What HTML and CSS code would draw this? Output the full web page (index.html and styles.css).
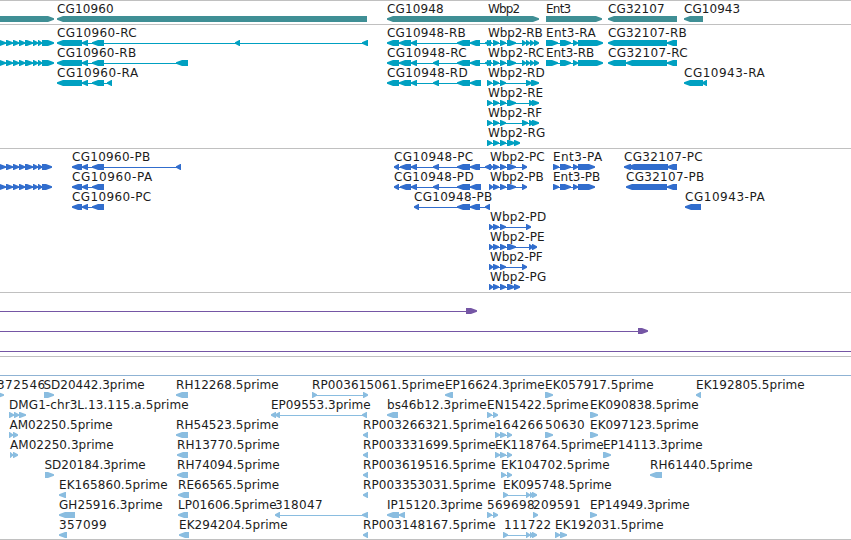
FILE: index.html
```html
<!DOCTYPE html>
<html lang="en">
<head>
<meta charset="utf-8">
<title>Genome browser</title>
<link rel="stylesheet" href="styles.css">
</head>
<body>
<main class="browser">
  <section class="track genes" data-track="genes"></section>
  <section class="track transcripts" data-track="transcripts"></section>
  <section class="track proteins" data-track="proteins"></section>
  <section class="track insertions" data-track="insertions"></section>
  <section class="track empty"></section>
  <section class="track ests" data-track="ests"></section>
</main>
<script src="tracks.js"></script>
</body>
</html>
```
FILE: styles.css
```css
body {
  margin: 0;
  background: #fff;
  overflow: hidden;
}
.browser {
  display: flex;
  flex-direction: column;
  width: 851px;
  height: 540px;
  overflow: hidden;
}
.track {
  box-sizing: border-box;
  flex: none;
  border-top: 1px solid #c0c0c0;
}
.genes { height: 24px; color: #3f8f95; }
.transcripts { height: 124px; color: #00a0c1; }
.proteins { height: 144px; color: #316dcd; }
.insertions { height: 64px; color: #7556a5; }
.empty { height: 19px; }
.ests {
  height: 165px;
  padding-top: 1px;
  color: #8abde0;
  border-top-color: #8fb3d4;
  border-bottom: 1px solid #c0c0c0;
}
.row {
  display: block;
  width: 851px;
  height: 20px;
  overflow: visible;
}
.label {
  font: 12px "DejaVu Sans", "Liberation Sans", sans-serif;
  fill: #1c1c1c;
}
.exon, .intron { fill: currentColor; }
.intron { shape-rendering: crispEdges; }
```
FILE: tracks.js
```js
// Feature: [label, labelStart, labelEnd, direction, [start, end, start, end, ...]]
const lead = [-1,6, 6,13, 13,19, 19,25, 25,33, 33,38, 38,42];
const tri = [487,492, 493,499, 500,506];
const ptri = [489,493, 493,499, 500,506];
const wb = [...tri, 507,516, 522,526, 526,530, 530,534, 534,539];
const est3 = [495,500, 500,506, 507,512];
const tail = [503,508, 526,530, 530,533, 532,537];
const tracks = {
  genes: [[
    ["",0,0,"R",[-9,54]], ["CG10960",57,114,"L",[57,367]],
    ["CG10948",387,444,"L",[387,487]], ["Wbp2",488,520.5,"R",[487,539]],
    ["Ent3",546,571.5,"R",[546,602]], ["CG32107",608,665,"L",[608,677]],
    ["CG10943",684,740.5,"L",[684,703]]
  ]],
  transcripts: [
    [
      ["",0,0,"R",[...lead,42,54]],
      ["CG10960-RC",57,137,"L",[57,82,82,88,92,104,235,240,362,368]],
      ["CG10948-RB",387,466,"L",[387,399,399,411,411,417,457,470,470,480,485,491]],
      ["Wbp2-RB",488,543,"R",wb],
      ["Ent3-RA",546,596,"R",[546,558,560,571,573,578,578,603]],
      ["CG32107-RB",608,687,"L",[608,667,667,677]]
    ],
    [
      ["",0,0,"R",[...lead,42,54]],
      ["CG10960-RB",57,136.5,"L",[57,82,82,88,92,104,176,188]],
      ["CG10948-RC",387,467,"L",[387,399,399,411,411,417,433,439,457,470,470,480,485,491]],
      ["Wbp2-RC",488,544.5,"R",wb],
      ["Ent3-RB",546,594.5,"R",[546,558,560,571,573,578,578,603]],
      ["CG32107-RC",608,688,"L",[608,626,626,667,667,677]]
    ],
    [
      ["CG10960-RA",57,138.5,"L",[57,82,82,88,92,104,107,112]],
      ["CG10948-RD",387,468,"L",[387,399,399,411,411,417,433,439,457,470,470,481]],
      ["Wbp2-RD",488,545,"R",[...tri,526,532,531,539]],
      ["CG10943-RA",684,765,"L",[684,703,702,707]]
    ],
    [["Wbp2-RE",488,543.5,"R",[...tri,507,516,529,534,532,539]]],
    [["Wbp2-RF",488,542.5,"R",[...tri,522,528,529,534,532,539]]],
    [["Wbp2-RG",488,545.5,"R",[...tri,507,515,514,520]]]
  ],
  proteins: [
    [
      ["",0,0,"R",[...lead,42,52]],
      ["CG10960-PB",72,150.5,"L",[72,82,82,88,92,104,176,181]],
      ["CG10948-PC",394,473.5,"L",[394,399,400,411,411,417,433,439,457,470,470,480,485,491]],
      ["Wbp2-PC",490,545,"R",[...ptri,507,516,522,527]],
      ["Ent3-PA",553,602.5,"R",[553,559,560,571,573,578,578,595]],
      ["CG32107-PC",624,703,"L",[624,631,628,668,667,677]]
    ],
    [
      ["",0,0,"R",[...lead,42,52]],
      ["CG10960-PA",72,152.5,"L",[72,82,82,88,92,104]],
      ["CG10948-PD",394,474,"L",[394,399,400,411,411,417,433,439,457,470,470,481]],
      ["Wbp2-PB",490,544,"R",[...ptri,507,516,522,527]],
      ["Ent3-PB",553,600.5,"R",[553,559,560,571,573,578,578,595]],
      ["CG32107-PB",626,704.5,"L",[626,667,667,677]]
    ],
    [
      ["CG10960-PC",72,151.5,"L",[72,82,82,88,92,104]],
      ["CG10948-PB",414,492.5,"L",[414,419,457,470,470,480,485,490]],
      ["CG10943-PA",685,765,"L",[685,701]]
    ],
    [["Wbp2-PD",490,546.5,"R",[...ptri,526,531]]],
    [["Wbp2-PE",490,545,"R",[...ptri,507,516,529,533,532,537]]],
    [["Wbp2-PF",490,543,"R",[...ptri,522,527]]],
    [["Wbp2-PG",490,546.5,"R",[...ptri,507,515,514,520]]]
  ],
  insertions: [
    [["",0,0,"R",[-9,-5,466,477]]],
    [["",0,0,"R",[-9,-5,638,648]]],
    [["",0,0,"R",[-9,-5,860,870]]]
  ],
  ests: [
    [
      ["372546",-3,45.5,"R",[-4,4]], ["SD20442.3prime",43.5,145,"R",[44,54]],
      ["RH12268.5prime",176,279,"L",[176,188]],
      ["RP003615061.5prime",312,445,"R",[312,317,363,368]],
      ["EP16624.3prime",445,545,"L",[445,453]],
      ["EK057917.5prime",545,654,"R",[545,553]],
      ["EK192805.5prime",696,805,"L",[696,701]]
    ],
    [
      ["DMG1-chr3L.13.115.a.5prime",9,189,"R",[9,14,14,19,19,26]],
      ["EP09553.3prime",271,371,"L",[271,276,275,280,362,367]],
      ["bs46b12.3prime",387,487,"L",[387,398]],
      ["EN15422.5prime",487,589,"R",[487,492,493,498]],
      ["EK090838.5prime",590,699,"R",[590,598]]
    ],
    [
      ["AM02250.5prime",9.5,113,"R",[9,13,13,18]],
      ["RH54523.5prime",176,279,"L",[176,188]],
      ["RP003266321.5prime",363,496,"L",[363,368]],
      ["164266",495,543.5,"R",est3], ["50630",545,585,"R",[545,553]],
      ["EK097123.5prime",590,699,"R",[590,598]]
    ],
    [
      ["AM02250.3prime",10,114,"R",[10,13,13,18]],
      ["RH13770.5prime",177,280,"L",[177,188]],
      ["RP003331699.5prime",363,496,"L",[363,368]],
      ["EK118764.5prime",495,604,"R",est3],
      ["EP14113.3prime",603,703,"R",[603,611]]
    ],
    [
      ["SD20184.3prime",44.5,146,"R",[45,54]],
      ["RH74094.5prime",177,280,"L",[177,188]],
      ["RP003619516.5prime",363,496,"L",[363,368]],
      ["EK104702.5prime",501,610,"R",[501,506,507,512]],
      ["RH61440.5prime",650,753,"L",[650,662]]
    ],
    [
      ["EK165860.5prime",59,168,"L",[59,66]],
      ["RE66565.5prime",178,279.5,"L",[178,189]],
      ["RP003353031.5prime",363,496,"L",[363,368]],
      ["EK095748.5prime",503,612,"R",tail]
    ],
    [
      ["GH25916.3prime",59,163,"L",[59,75]],
      ["LP01606.5prime",178,277,"L",[178,188]],
      ["318047",275,323,"L",[275,280,362,368]],
      ["IP15120.3prime",387,483,"L",[387,399,399,405]],
      ["569698",487,535,"R",[487,492,493,498]],
      ["209591",533,581,"R",[533,538]],
      ["EP14949.3prime",590,690,"R",[590,597]]
    ],
    [
      ["357099",59,107,"L",[59,67]],
      ["EK294204.5prime",179,288,"L",[179,189]],
      ["RP003148167.5prime",363,496,"L",[363,368]],
      ["111722",504,551.5,"R",tail],
      ["EK192031.5prime",555,664,"R",[555,560,560,567]]
    ]
  ]
};

const NS = "http://www.w3.org/2000/svg";
function add(parent, name, attrs) {
  const el = document.createElementNS(NS, name);
  for (const key in attrs) el.setAttribute(key, attrs[key]);
  parent.appendChild(el);
  return el;
}

// Directional block: a 6px bar with a tapered end.
function block(a, b, dir) {
  const p = Math.min((b - a) * 0.85, 6);
  const tip = dir === "L" ? a : b;
  const s = dir === "L" ? 1 : -1;
  const back = dir === "L" ? b : a;
  const neck = tip + s * p;
  return `M${tip} 17.2L${neck} 15H${back}V21H${neck}L${tip} 18.8Z`;
}

for (const section of document.querySelectorAll("[data-track]")) {
  for (const features of tracks[section.dataset.track]) {
    const row = add(section, "svg", { class: "row" });
    for (const [name, x0, x1, dir, xs] of features) {
      const end = xs[xs.length - 1];
      if (xs.length > 2) {
        add(row, "rect", { class: "intron", x: xs[0] + 1, y: 18, width: end - xs[0] - 2, height: 1 });
      }
      for (let i = 0; i < xs.length; i += 2) {
        add(row, "path", { class: "exon", d: block(xs[i], xs[i + 1], dir) });
      }
      if (name) {
        const text = add(row, "text", { class: "label", x: x0, y: 12, textLength: x1 - x0 - 0.3 });
        text.textContent = name;
      }
    }
  }
}
```
